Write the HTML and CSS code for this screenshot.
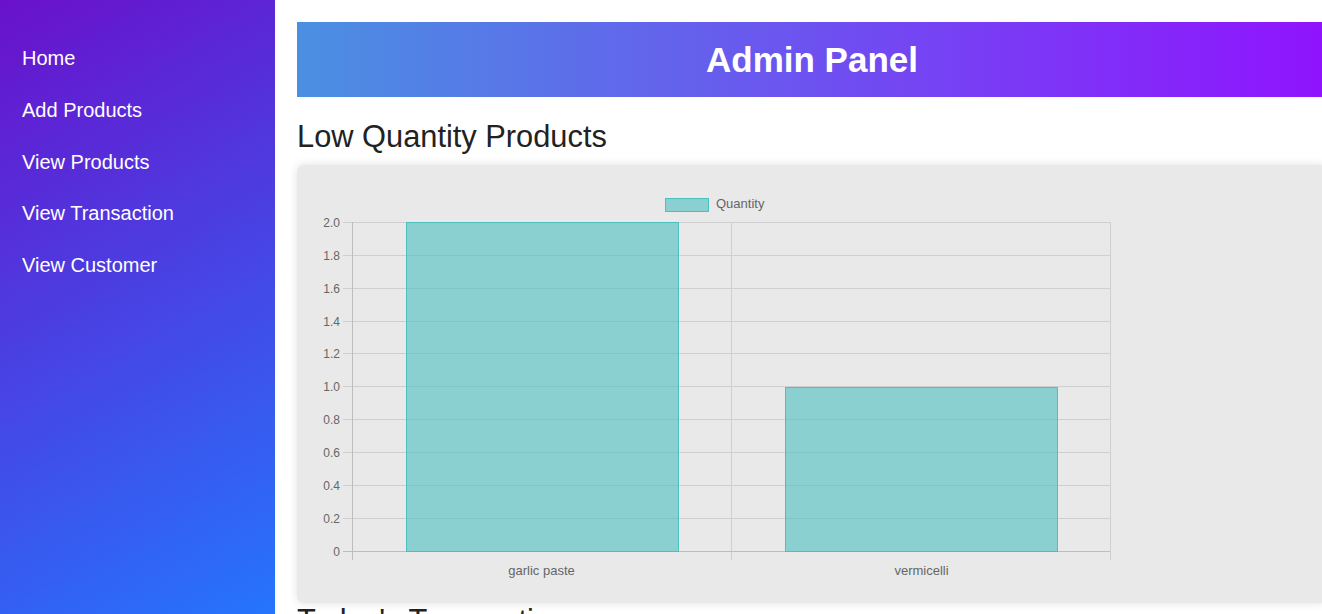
FILE: index.html
```html
<!DOCTYPE html>
<html>
<head>
<meta charset="utf-8">
<link rel="stylesheet" href="styles.css">
</head>
<body>
<nav class="sidebar">
  <a class="nav-link" href="#">Home</a>
  <a class="nav-link" href="#">Add Products</a>
  <a class="nav-link" href="#">View Products</a>
  <a class="nav-link" href="#">View Transaction</a>
  <a class="nav-link" href="#">View Customer</a>
</nav>
<main class="main">
  <header class="banner"><h1 class="banner-title">Admin Panel</h1></header>
  <h2 class="section-title">Low Quantity Products</h2>
  <section class="chart-card">
    <svg class="chart" width="830" height="410" viewBox="0 0 830 410" xmlns="http://www.w3.org/2000/svg">
      <g class="legend">
        <rect x="348.5" y="13.5" width="43" height="13" fill="rgba(75,192,192,0.6)" stroke="#4bc0c0" stroke-width="1"/>
        <text x="399" y="23" class="lbl lbl-lg" text-anchor="start">Quantity</text>
      </g>
      <g stroke="#cfcfcf" stroke-width="1">
        <line x1="26" y1="37.5" x2="793" y2="37.5"/>
        <line x1="26" y1="70.5" x2="793" y2="70.5"/>
        <line x1="26" y1="103.5" x2="793" y2="103.5"/>
        <line x1="26" y1="136.5" x2="793" y2="136.5"/>
        <line x1="26" y1="168.5" x2="793" y2="168.5"/>
        <line x1="26" y1="201.5" x2="793" y2="201.5"/>
        <line x1="26" y1="234.5" x2="793" y2="234.5"/>
        <line x1="26" y1="267.5" x2="793" y2="267.5"/>
        <line x1="26" y1="300.5" x2="793" y2="300.5"/>
        <line x1="26" y1="333.5" x2="793" y2="333.5"/>
        <line x1="414.5" y1="37" x2="414.5" y2="375"/>
        <line x1="793.5" y1="37" x2="793.5" y2="375"/>
      </g>
      <g stroke="#bdbdbd" stroke-width="1">
        <line x1="26" y1="366.5" x2="793" y2="366.5"/>
        <line x1="35.5" y1="37" x2="35.5" y2="375"/>
      </g>
      <rect x="89.5" y="37.5" width="272" height="329" fill="rgba(75,192,192,0.6)" stroke="#4bc0c0" stroke-width="1"/>
      <rect x="468.5" y="202.5" width="272" height="164" fill="rgba(75,192,192,0.6)" stroke="#4bc0c0" stroke-width="1"/>
      <g class="lbl" text-anchor="end">
        <text x="23" y="41.5">2.0</text>
        <text x="23" y="74.5">1.8</text>
        <text x="23" y="107.5">1.6</text>
        <text x="23" y="140.5">1.4</text>
        <text x="23" y="172.5">1.2</text>
        <text x="23" y="205.5">1.0</text>
        <text x="23" y="238.5">0.8</text>
        <text x="23" y="271.5">0.6</text>
        <text x="23" y="304.5">0.4</text>
        <text x="23" y="337.5">0.2</text>
        <text x="23" y="370.5">0</text>
      </g>
      <g class="lbl lbl-lg" text-anchor="middle">
        <text x="224.5" y="390">garlic paste</text>
        <text x="604.5" y="390">vermicelli</text>
      </g>
    </svg>
  </section>
  <h2 class="section-title">Today's Transaction</h2>
</main>
</body>
</html>
```
FILE: styles.css
```css
html, body {
  margin: 0;
  padding: 0;
}
body {
  font-family: "Liberation Sans", Arial, sans-serif;
  overflow: hidden;
  background: #fff;
  height: 614px;
}
.sidebar {
  position: fixed;
  top: 0;
  left: 0;
  width: 275px;
  height: 100vh;
  padding-top: 33px;
  box-sizing: border-box;
  background: linear-gradient(150deg, #6a11cb 0%, #2575fc 100%);
  display: flex;
  flex-direction: column;
}
.nav-link {
  display: block;
  color: #fff;
  text-decoration: none;
  font-size: 20px;
  line-height: 23.75px;
  padding: 14px 22px;
}
.main {
  margin-left: 297px;
  width: 1030px;
  padding-top: 22px;
}
.banner {
  height: 75px;
  background: linear-gradient(to right, #4a90e2, #9013fe);
  display: flex;
  align-items: center;
  justify-content: center;
}
.banner-title {
  margin: 0;
  color: #fff;
  font-size: 35px;
  font-weight: bold;
}
.section-title {
  margin: 22px 0 10px 0;
  font-size: 30.8px;
  line-height: 36px;
  font-weight: normal;
  color: #222;
}
.chart-card {
  background: #e9e9e9;
  border-radius: 7px;
  box-shadow: 0 0 10px rgba(0, 0, 0, 0.12);
  height: 438px;
  padding: 20px;
  box-sizing: border-box;
}
.chart {
  display: block;
}
.lbl {
  font-family: "Liberation Sans", Arial, sans-serif;
  font-size: 12px;
  fill: #666;
}
.lbl-lg {
  font-size: 13px;
}
.chart-card + .section-title {
  margin-top: 0;
}
```
